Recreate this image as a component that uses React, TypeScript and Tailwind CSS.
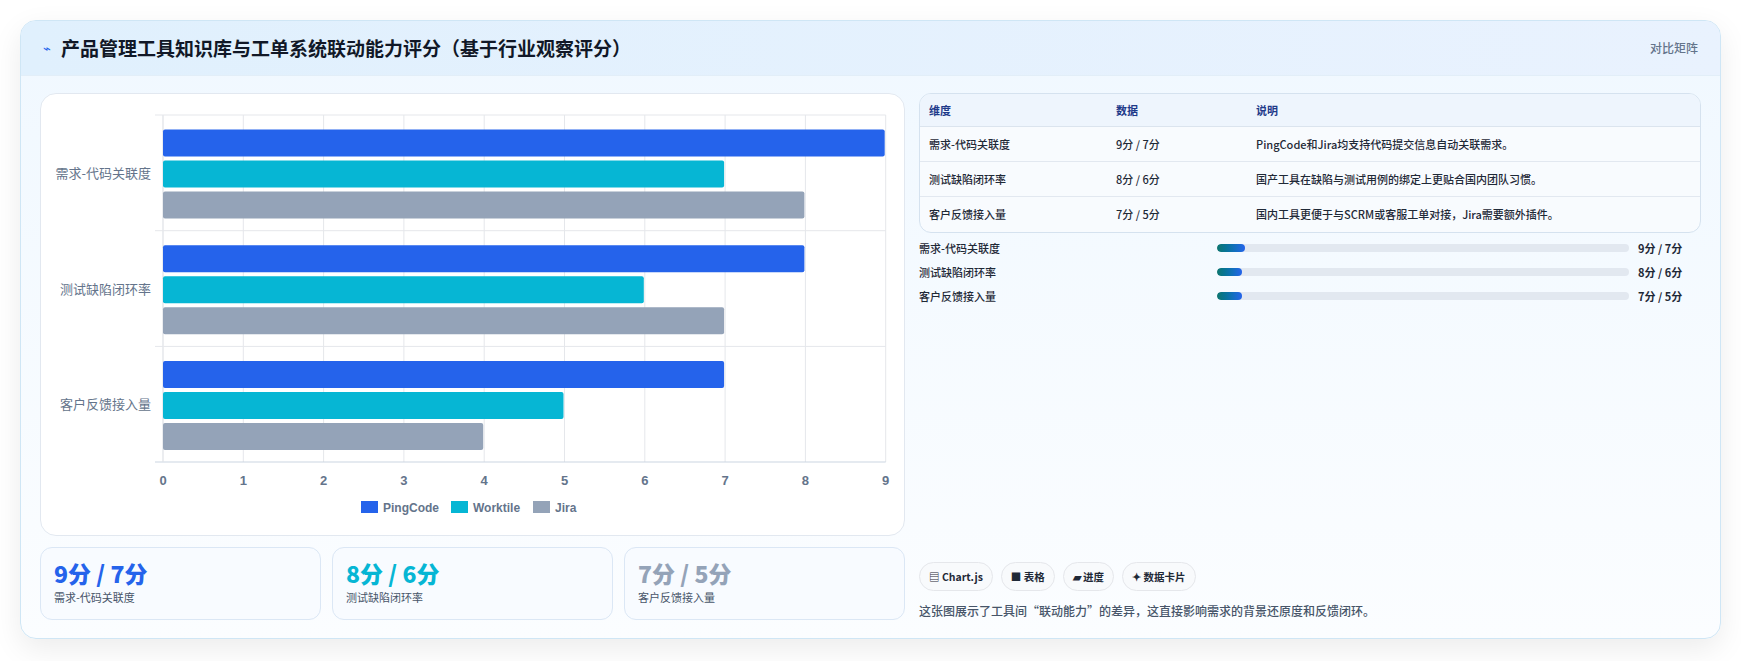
import React from "react";

const cats = [
  { name: "需求-代码关联度", v: [9, 7, 8] },
  { name: "测试缺陷闭环率", v: [8, 6, 7] },
  { name: "客户反馈接入量", v: [7, 5, 4] },
];
const colors = ["#2563eb", "#06b6d4", "#94a3b8"];

function Chart() {
  const x0 = 122, unit = 80.3, top = 21, bottom = 368, band = 115.7;
  return (
    <svg width="865" height="443" className="block">
      {Array.from({ length: 10 }).map((_, i) => (
        <line key={i} x1={x0 + i * unit} x2={x0 + i * unit} y1={top} y2={bottom} stroke="#e5e7eb" />
      ))}
      {[0, 1, 2].map((i) => (
        <line key={i} x1={x0 - 8} x2={x0 + 9 * unit} y1={top + i * band} y2={top + i * band} stroke="#e5e7eb" />
      ))}
      <line x1={x0 - 8} x2={x0 + 9 * unit} y1={bottom} y2={bottom} stroke="#cbd5e1" />
      <line x1={x0} x2={x0} y1={top} y2={bottom} stroke="#e5e7eb" />
      {cats.map((c, ci) => (
        <g key={ci}>
          <text x={x0 - 12} y={top + ci * band + band / 2 + 5} textAnchor="end" fontSize="13" fill="#64748b" fontFamily="Noto Sans CJK SC, sans-serif">{c.name}</text>
          {c.v.map((v, bi) => (
            <rect key={bi} x={x0} y={top + ci * band + 14.5 + bi * 31} width={v * unit - 1} height={27} rx={2} fill={colors[bi]} />
          ))}
        </g>
      ))}
      {Array.from({ length: 10 }).map((_, i) => (
        <text key={i} x={x0 + i * unit} y={391} textAnchor="middle" fontSize="13" fontWeight="600" fill="#64748b" fontFamily="Liberation Sans, sans-serif">{i}</text>
      ))}
      {[["PingCode", 324], ["Worktile", 414], ["Jira", 496]].map(([l, x], i) => (
        <g key={i}>
          <rect x={(x as number) - 4} y={407} width={17} height={12} fill={colors[i]} />
          <text x={(x as number) + 18} y={418} fontSize="12" fontWeight="600" fill="#64748b" fontFamily="Liberation Sans, sans-serif">{l}</text>
        </g>
      ))}
    </svg>
  );
}

export default function App() {
  const f = { fontFamily: '"Noto Sans CJK SC", "Noto Sans", sans-serif' };
  return (
    <div className="w-[1741px] h-[661px] bg-white pt-[20px] pl-[20px]" style={f}>
      <div className="w-[1701px] h-[619px] rounded-2xl border border-[#cfe6f5] shadow-[0_10px_30px_rgba(0,0,0,0.08)] bg-gradient-to-b from-[#f0f8ff] to-[#fbfdff] overflow-hidden flex flex-col">
        <div className="h-[55px] shrink-0 flex items-center justify-between px-[22px] bg-gradient-to-r from-[#e0f0fd] to-[#e9f2fe] border-b border-[#e2eef8]">
          <div className="flex items-center gap-[10px]">
            <span className="text-[#2563eb] text-[13px]">⌁</span>
            <span className="text-[19px] font-bold text-[#111827]">产品管理工具知识库与工单系统联动能力评分（基于行业观察评分）</span>
          </div>
          <span className="text-[12px] text-[#64748b] font-medium">对比矩阵</span>
        </div>
        <div className="flex-1 flex gap-[14px] px-[19px] pt-[17px] pb-[18px]">
          <div className="w-[865px] flex flex-col gap-[11px]">
            <div className="h-[443px] rounded-2xl border border-[#e2e8f0] bg-white">
              <Chart />
            </div>
            <div className="grid grid-cols-3 gap-[11px]">
              {[["9分 / 7分", "text-[#2563eb]", "需求-代码关联度"], ["8分 / 6分", "text-[#06b6d4]", "测试缺陷闭环率"], ["7分 / 5分", "text-[#94a3b8]", "客户反馈接入量"]].map(([a, c, b]) => (
                <div key={b} className="h-[73px] rounded-xl border border-[#dbe7f5] bg-[#f8fbff] px-[13px] pt-[10px]">
                  <div className={`text-[23px] font-extrabold leading-[30px] ${c}`}>{a}</div>
                  <div className="text-[11px] text-[#475569] mt-[1px]">{b}</div>
                </div>
              ))}
            </div>
          </div>
          <div className="flex-1 flex flex-col">
            <div className="rounded-xl border border-[#d5e2ef] overflow-hidden bg-[#f8fbfe]">
              <div className="grid grid-cols-[187px_140px_1fr] h-[33px] items-center px-[9px] text-[11px] font-semibold text-[#1e3a8a] bg-[#eef5fd] border-b border-[#dbe4ee]">
                <span>维度</span><span>数据</span><span>说明</span>
              </div>
              {[["需求-代码关联度", "9分 / 7分", "PingCode和Jira均支持代码提交信息自动关联需求。"], ["测试缺陷闭环率", "8分 / 6分", "国产工具在缺陷与测试用例的绑定上更贴合国内团队习惯。"], ["客户反馈接入量", "7分 / 5分", "国内工具更便于与SCRM或客服工单对接，Jira需要额外插件。"]].map((r, i) => (
                <div key={i} className={`grid grid-cols-[187px_140px_1fr] h-[35px] items-center px-[9px] text-[11px] font-medium text-[#1f2937] ${i < 2 ? "border-b border-[#e2e8f0]" : ""}`}>
                  <span>{r[0]}</span><span>{r[1]}</span><span>{r[2]}</span>
                </div>
              ))}
            </div>
            <div className="mt-[6px] flex flex-col gap-[6px]">
              {[["需求-代码关联度", "9分 / 7分", 28], ["测试缺陷闭环率", "8分 / 6分", 25], ["客户反馈接入量", "7分 / 5分", 25]].map(([l, v, w]) => (
                <div key={l as string} className="flex items-center h-[18px] text-[11px] font-medium text-[#1f2937]">
                  <span className="w-[298px]">{l}</span>
                  <div className="w-[412px] h-[8px] rounded-full bg-[#e2e8f0] overflow-hidden">
                    <div className="h-full rounded-full bg-gradient-to-r from-[#0f766e] to-[#2563eb]" style={{ width: `${w}px` }} />
                  </div>
                  <span className="ml-[9px] font-bold">{v}</span>
                </div>
              ))}
            </div>
            <div className="mt-auto flex gap-[8px]">
              {["▤ Chart.js", "■ 表格", "▰ 进度", "✦ 数据卡片"].map((t) => (
                <span key={t} className="h-[29px] px-[9px] rounded-full border border-[#e5e7eb] bg-[#f8fafc] text-[10.5px] font-semibold text-[#1f2937] flex items-center">{t}</span>
              ))}
            </div>
            <div className="mt-[11px] text-[12px] text-[#475569] font-medium">这张图展示了工具间“联动能力”的差异，这直接影响需求的背景还原度和反馈闭环。</div>
          </div>
        </div>
      </div>
    </div>
  );
}
